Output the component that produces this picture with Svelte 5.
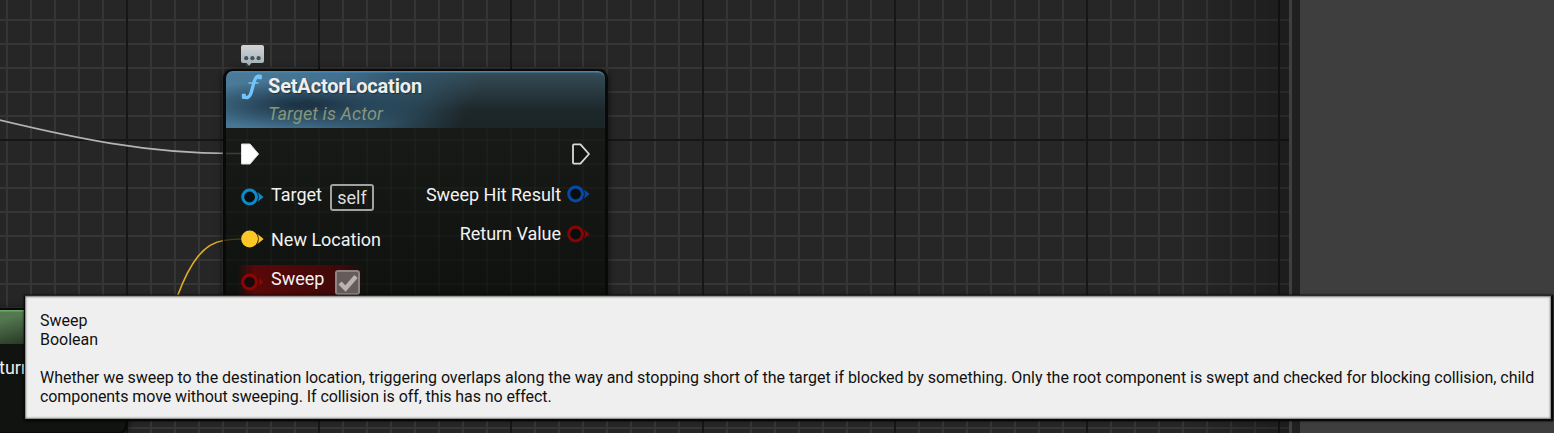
<script>
  const tooltip = {
    title: 'Sweep',
    type: 'Boolean',
    lines: [
      'Whether we sweep to the destination location, triggering overlaps along the way and stopping short of the target if blocked by something. Only the root component is swept and checked for blocking collision, child',
      'components move without sweeping. If collision is off, this has no effect.'
    ]
  };
</script>

{#snippet pin(color, filled)}
  <svg class="pin" width="24" height="18" viewBox="0 0 24 18">
    <path d="M17.2 3.8Q19.5 9 17.2 14.2L23.6 9Z" fill={color} />
    <circle cx="9.6" cy="9" r="6.9" fill={filled ? color : '#070b0c'} fill-opacity={filled ? 1 : 0.75} stroke={color} stroke-width="3" />
    <path d="M17.6 4.6Q20 9 17.6 13.4" fill="none" stroke="#000" stroke-opacity="0.5" stroke-width="1" />
  </svg>
{/snippet}

<div class="editor">
  <div class="graph">
    <svg class="wires" width="1289" height="433">
      <path d="M-2 119.7 C70 137 145 153.5 232 153.5" stroke="#b4b4b4" />
      <path d="M177.5 296 C190 262 204 243 224 240.5" stroke="#dfae22" />
    </svg>

    <div class="node getter">
      <div class="getter-head"></div>
      <div class="getter-label">turn Value</div>
    </div>

    <svg class="bubble" width="26" height="23" viewBox="0 0 26 23">
      <defs><linearGradient id="bubbleFill" x2="0" y2="1"><stop stop-color="#d0d4d7" /><stop offset="1" stop-color="#a6afb3" /></linearGradient></defs>
      <path d="M3 1H22Q24 1 24 3V17Q24 19 22 19H11.5L9 22L6.5 19H3Q1 19 1 17V3Q1 1 3 1Z" fill="url(#bubbleFill)" />
      <g fill="#3d5660"><circle cx="6.2" cy="14.2" r="2.1" /><circle cx="12.4" cy="14.2" r="2.1" /><circle cx="18.6" cy="14.2" r="2.1" /></g>
    </svg>

    <div class="node setter">
      <header>
        <svg class="fn" width="22" height="28" viewBox="0 0 22 28">
          <path d="M18.6 3.4C15.6 2.6 14.2 4.8 13.2 8.5L10.2 19.5C9 24 6.6 25.4 2.6 24.2" fill="none" stroke="#72c4fb" stroke-width="3.3" />
          <path d="M7.5 10H17.5M1.5 21.4H4.2V25.2H1.5ZM17 2.4H20.2V5.6H17.2Z" fill="#72c4fb" stroke="#72c4fb" stroke-width="1.3" />
        </svg>
        <div class="headings">
          <div class="name">SetActorLocation</div>
          <div class="sub">Target is Actor</div>
        </div>
      </header>
      <div class="pins">
        <div class="inputs">
          <div class="row exec">
            <svg width="20" height="24" viewBox="0 0 20 24"><path d="M1.5 2H10L18.6 12L10 22H1.5Z" fill="#fff" stroke="#ddd" stroke-width="1" stroke-linejoin="round" /></svg>
          </div>
          <div class="row target">{@render pin('#0d8ac8', false)}<span class="label up">Target</span><span class="self">self</span></div>
          <div class="row loc">{@render pin('#fdc728', true)}<span class="label">New Location</span></div>
          <div class="row sweep">
            {@render pin('#8e0505', false)}<span class="label up">Sweep</span>
            <svg class="check" width="25" height="25" viewBox="0 0 25 25">
              <rect x="1" y="1" width="23" height="23" rx="2" fill="#665b5b" stroke="#8f8484" stroke-width="2" />
              <path d="M5 13L10.5 18.5L21 6.5" fill="none" stroke="#bdb2b2" stroke-width="4.4" />
            </svg>
          </div>
        </div>
        <div class="outputs">
          <div class="row exec">
            <svg width="20" height="24" viewBox="0 0 20 24"><path d="M2 3.4Q2 2.4 3 2.4H9.4L18 12L9.4 21.6H3Q2 21.6 2 20.6Z" fill="#111411" stroke="#dadada" stroke-width="1.8" stroke-linejoin="round" /></svg>
          </div>
          <div class="row hit"><span class="label">Sweep Hit Result</span>{@render pin('#0a48a8', false)}</div>
          <div class="row ret"><span class="label">Return Value</span>{@render pin('#850606', false)}</div>
        </div>
      </div>
    </div>
    <svg class="wires" width="1289" height="433">
      <path d="M226 153.5H241" stroke="#fff" stroke-opacity="0.16" />
      <path d="M224 240.5Q232 239 242 239" stroke="#dfae22" stroke-opacity="0.25" />
    </svg>
  </div>
  <div class="splitter"></div>
  <aside></aside>

  <div class="tooltip">
    <div class="t1">{tooltip.title}</div>
    <div class="t2">{tooltip.type}</div>
    <div class="gap"></div>
    <div class="t3">{tooltip.lines[0]}</div>
    <div class="t4">{tooltip.lines[1]}</div>
  </div>
</div>

<style>
  .editor {
    position: relative;
    display: flex;
    width: 1554px;
    height: 433px;
    overflow: hidden;
    font-family: Roboto, sans-serif;
    background: #3e3e3e;
  }
  .graph {
    position: relative;
    width: 1289px;
    flex: none;
    overflow: hidden;
    background:
      linear-gradient(90deg, transparent 1180px, #0000001c 1230px, #00000040 1289px),
      linear-gradient(90deg, #161616 2px, transparent 2px) 126px 0 / 192px 100%,
      linear-gradient(#161616 2px, transparent 2px) 0 139px / 100% 192px,
      linear-gradient(90deg, #353535 2px, transparent 2px) 6px 0 / 24px 100%,
      linear-gradient(#353535 2px, transparent 2px) 0 19px / 100% 24px,
      #262626;
  }
  .splitter {
    width: 8px;
    flex: none;
    border-left: 3px solid #3f3f3f;
    background: #202020;
  }
  aside { flex: 1; background: #3e3e3e; }
  .wires { position: absolute; left: 0; top: 0; }
  .wires path { fill: none; stroke-width: 1.6; }
  .bubble { position: absolute; left: 240px; top: 44px; }
  .node { position: absolute; box-sizing: border-box; border: 2px solid #080908; }
  .setter {
    left: 223px;
    top: 69px;
    width: 385px;
    height: 330px;
    border-radius: 9px;
    border-left-width: 3px;
    border-right-width: 3px;
    background:
      linear-gradient(90deg, #ffffff05 2px, transparent 2px) 20px 0 / 24px 100%,
      linear-gradient(#ffffff05 2px, transparent 2px) 0 20px / 100% 24px,
      linear-gradient(#181a17 60px, #0e110e 230px);
    box-shadow: 0 1px 7px #000a;
  }
  header {
    box-sizing: border-box;
    display: flex;
    height: 57px;
    padding: 1px 0 0 15px;
    border-radius: 7px 7px 0 0;
    box-shadow: inset 0 2px 1px -0.5px #4a87b0;
    background:
      radial-gradient(ellipse 125px 25px at 80px 34px, #1d3445 10%, #1d344500 100%),
      linear-gradient(118deg, #4b7b98 0, #42708e 28%, #315469 44%, #1e353f00 64%),
      linear-gradient(#364d58, #1d282b 68%, #1c2628);
  }
  .fn { flex: none; margin-top: 1px; }
  .headings { padding-left: 5px; }
  .name {
    height: 28px;
    font: 700 20px/28px Roboto, sans-serif;
    letter-spacing: -0.17px;
    color: #eee;
    text-shadow: 1px 1px 1px #0006;
    white-space: nowrap;
  }
  .sub { font: italic 400 18px/27px Roboto, sans-serif; letter-spacing: 0.1px; color: #879679; white-space: nowrap; }
  .pins { display: flex; justify-content: space-between; padding: 0 14px; }
  .row { display: flex; align-items: center; height: 42px; }
  .outputs .row { justify-content: flex-end; height: 40px; }
  .pin { flex: none; }
  .label { font-size: 18px; line-height: 22px; color: #f2f2f2; white-space: nowrap; }
  .inputs .label { margin-left: 7px; }
  .inputs .up { position: relative; top: -2px; }
  .inputs .sweep .up { top: -3px; }
  .outputs .label { margin-right: 6px; letter-spacing: -0.03px; }
  .outputs .pin { margin-right: 1px; margin-left: -1px; }
  .hit .label { position: relative; top: 1px; }
  .loc .label { position: relative; top: 1px; }
  .inputs .exec { box-sizing: border-box; height: 48px; padding-top: 4px; }
  .outputs .exec { box-sizing: border-box; height: 46px; padding-top: 5px; }
  .self {
    box-sizing: border-box;
    width: 44px;
    height: 27px;
    margin: 1px 0 0 8px;
    border: 2px solid #a2a2a0;
    border-radius: 3px;
    color: #ddd;
    font-size: 18px;
    line-height: 24px;
    text-align: center;
  }
  .sweep {
    width: 124px;
    height: 34px;
    margin: 5px 16px 0 -3px;
    padding-left: 3px;
    background: linear-gradient(90deg, #65080800, #5a0808 14%, #3e0909 82%, #3e090900);
  }
  .check { flex: none; margin: 1px 0 0 11px; }
  .getter { left: -180px; top: 308px; width: 308px; height: 126px; border-radius: 9px; border-left-width: 3px; border-right-width: 3px; background: #0f120ff2; box-shadow: 0 1px 7px #000a; }
  .getter-head { height: 34px; background: linear-gradient(165deg, #53784f 50%, #2a3c28 75%); box-shadow: inset 0 2px 1px -0.5px #6faa68; }
  .getter-label { padding: 13px 0 0 176px; color: #eee; font-size: 18px; line-height: 22px; white-space: nowrap; }
  .tooltip {
    position: absolute;
    left: 24px;
    top: 295px;
    box-sizing: border-box;
    width: 1529px;
    height: 126px;
    padding: 15px 0 0 15px;
    border: solid #080808;
    border-width: 1px 2px 2px 1px;
    border-top-color: #2b2b2b;
    background: #efefef;
    box-shadow: inset 0 0 2px 1px #777, 0 0 2px #000;
    color: #111;
    font-size: 16px;
    line-height: 19px;
    white-space: nowrap;
  }
  .tooltip div { width: max-content; }
  .t3 { letter-spacing: -0.031px; }
  .t4 { letter-spacing: -0.085px; }
  .gap { height: 19px; }
</style>
